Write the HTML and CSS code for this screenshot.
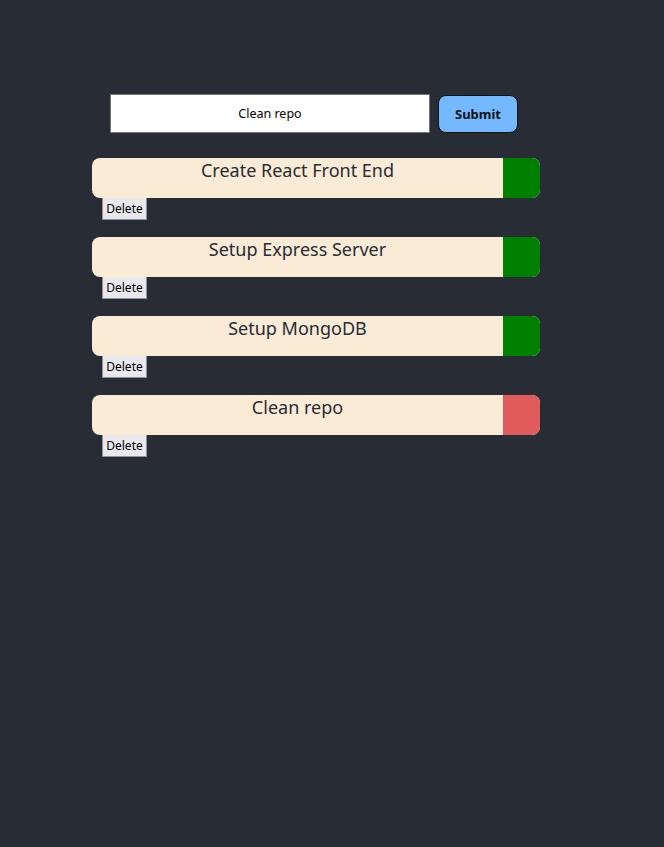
FILE: index.html
```html
<!DOCTYPE html>
<html>
<head>
<meta charset="utf-8">
<link rel="stylesheet" href="styles.css">
</head>
<body>
<div class="app">
  <form class="todo-form">
    <input class="todo-input" type="text" value="Clean repo">
    <button class="submit-btn" type="button">Submit</button>
  </form>
  <ul class="todo-list">
    <li class="todo">
      <div class="todo-card"><span class="todo-title">Create React Front End</span><span class="status done"></span></div>
      <button class="delete-btn" type="button">Delete</button>
    </li>
    <li class="todo">
      <div class="todo-card"><span class="todo-title">Setup Express Server</span><span class="status done"></span></div>
      <button class="delete-btn" type="button">Delete</button>
    </li>
    <li class="todo">
      <div class="todo-card"><span class="todo-title">Setup MongoDB</span><span class="status done"></span></div>
      <button class="delete-btn" type="button">Delete</button>
    </li>
    <li class="todo">
      <div class="todo-card"><span class="todo-title">Clean repo</span><span class="status pending"></span></div>
      <button class="delete-btn" type="button">Delete</button>
    </li>
  </ul>
</div>
</body>
</html>
```
FILE: styles.css
```css
html, body {
  margin: 0;
  padding: 0;
  background: #282c34;
  height: 100%;
}
body {
  font-family: "Noto Sans", "Open Sans", sans-serif;
}
.app {
  padding-top: 94px;
  padding-left: 92px;
  width: 448px;
}
.todo-form {
  display: flex;
  align-items: flex-start;
  margin: 0 0 0 18px;
  gap: 8px;
}
.todo-input {
  box-sizing: border-box;
  width: 320px;
  height: 39px;
  border: 1px solid #767676;
  background: #fff;
  text-align: center;
  font-family: inherit;
  font-size: 12.5px;
  color: #000;
  padding: 0;
  margin: 0;
}
.submit-btn {
  box-sizing: border-box;
  width: 80px;
  height: 38px;
  margin: 1px 0 0 0;
  background: #74b9ff;
  border: 1px solid #111;
  border-radius: 8px;
  font-family: inherit;
  font-weight: bold;
  font-size: 13px;
  color: #111;
  padding: 0;
}
.todo-list {
  list-style: none;
  margin: 25px 0 0 0;
  padding: 0;
  display: flex;
  flex-direction: column;
  gap: 17px;
}
.todo {
  display: flex;
  flex-direction: column;
  align-items: flex-start;
}
.todo-card {
  display: flex;
  width: 448px;
  height: 40px;
  background: #faebd7;
  border-radius: 8px;
  overflow: hidden;
}
.todo-title {
  flex: 1;
  text-align: center;
  font-size: 18px;
  line-height: 24px;
  color: #282c34;
}
.status {
  width: 37px;
  height: 100%;
}
.status.done { background: #008000; }
.status.pending { background: #e05c5c; }
.delete-btn {
  box-sizing: border-box;
  margin-left: 10px;
  height: 22px;
  width: 45px;
  padding: 0;
  background: #e9e9ed;
  border: 1px solid #8f8f9d;
  border-top: none;
  font-family: inherit;
  font-size: 12px;
  color: #000;
}
```
